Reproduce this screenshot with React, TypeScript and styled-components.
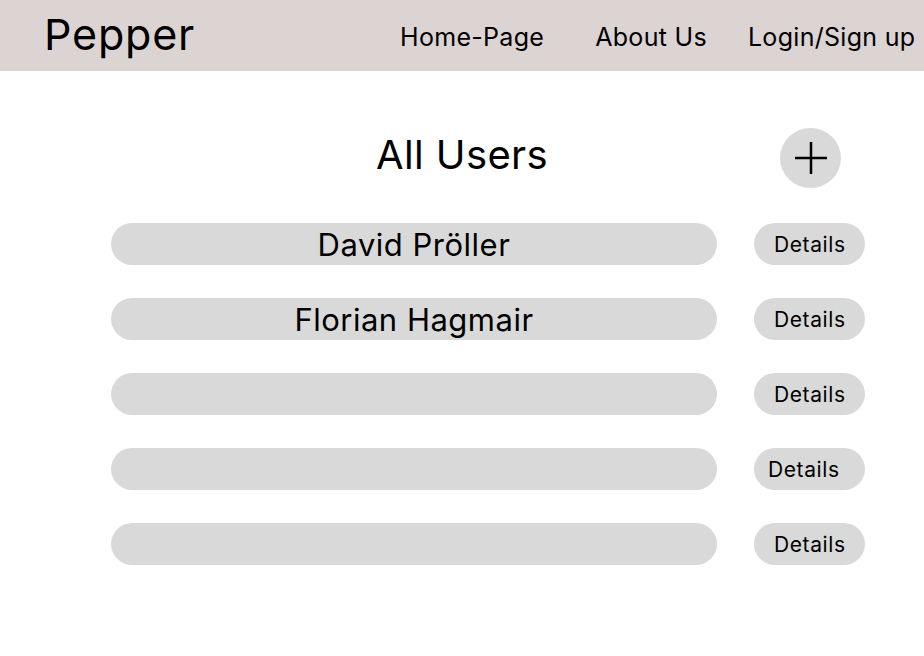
import React from "react";
import styled, { createGlobalStyle } from "styled-components";

const Global = createGlobalStyle`
  html, body { margin: 0; padding: 0; background: #ffffff; }
  body { font-family: Inter, "Noto Sans", sans-serif; color: #000; }
`;

const Page = styled.div`
  width: 924px;
  min-height: 656px;
  background: #fff;
`;

const Header = styled.header`
  height: 71px;
  background: #dcd3d3;
  display: flex;
  align-items: center;
  padding-left: 44px;
  box-sizing: border-box;
`;

const Logo = styled.div`
  font-size: 43px;
  font-weight: 400;
  line-height: 1;
  margin-top: -2px;
  letter-spacing: 0.8px;
`;

const Nav = styled.nav`
  display: flex;
  align-items: center;
  margin-left: 205px;
`;

const NavItem = styled.a<{ $gap: number }>`
  font-size: 25px;
  letter-spacing: 0.3px;
  color: #000;
  text-decoration: none;
  margin-left: ${(p) => p.$gap}px;
  white-space: nowrap;
  line-height: 1;
  margin-top: 4px;
`;

const Main = styled.main`
  padding-top: 57px;
  display: flex;
  flex-direction: column;
`;

const TitleRow = styled.div`
  display: grid;
  grid-template-columns: 1fr auto 1fr;
  align-items: center;
  height: 60px;
`;

const Title = styled.h1`
  grid-column: 2;
  margin: -6px 0 0 0;
  font-size: 40px;
  letter-spacing: 0.4px;
  font-weight: 400;
  line-height: 1;
`;

const AddButton = styled.button`
  grid-column: 3;
  justify-self: start;
  margin-left: 232px;
  width: 61px;
  height: 60px;
  border-radius: 50%;
  border: none;
  background: #d9d9d9;
  padding: 0;
  display: flex;
  align-items: center;
  justify-content: center;
`;

const List = styled.div`
  display: flex;
  flex-direction: column;
  gap: 33px;
  margin-top: 35px;
  padding-left: 111px;
`;

const Row = styled.div`
  display: flex;
  align-items: center;
  height: 42px;
`;

const NameBar = styled.div`
  width: 606px;
  height: 42px;
  border-radius: 21px;
  background: #d9d9d9;
  display: flex;
  align-items: center;
  justify-content: center;
  font-size: 31px;
  letter-spacing: 0.5px;
  line-height: 1;
`;

const DetailsButton = styled.button<{ $shift: number }>`
  margin-left: 37px;
  width: 111px;
  height: 42px;
  border-radius: 21px;
  border: none;
  background: #d9d9d9;
  font-family: Inter, "Noto Sans", sans-serif;
  font-size: 21px;
  letter-spacing: 0.6px;
  color: #000;
  padding: 0 0 0 ${(p) => p.$shift}px;
  display: flex;
  align-items: center;
  justify-content: flex-start;
  line-height: 1;
`;

const users = [
  { name: "David Pröller", shift: 20 },
  { name: "Florian Hagmair", shift: 20 },
  { name: "", shift: 20 },
  { name: "", shift: 14 },
  { name: "", shift: 20 },
];

export default function App() {
  return (
    <Page>
      <Global />
      <Header>
        <Logo>Pepper</Logo>
        <Nav>
          <NavItem $gap={0}>Home-Page</NavItem>
          <NavItem $gap={51}>About Us</NavItem>
          <NavItem $gap={41}>Login/Sign up</NavItem>
        </Nav>
      </Header>
      <Main>
        <TitleRow>
          <Title>All Users</Title>
          <AddButton aria-label="Add user">
            <svg width="34" height="34" viewBox="0 0 34 34">
              <path d="M17 1 V33 M1 17 H33" stroke="#000" strokeWidth="2.5" />
            </svg>
          </AddButton>
        </TitleRow>
        <List>
          {users.map((u, i) => (
            <Row key={i}>
              <NameBar>{u.name}</NameBar>
              <DetailsButton $shift={u.shift}>Details</DetailsButton>
            </Row>
          ))}
        </List>
      </Main>
    </Page>
  );
}
